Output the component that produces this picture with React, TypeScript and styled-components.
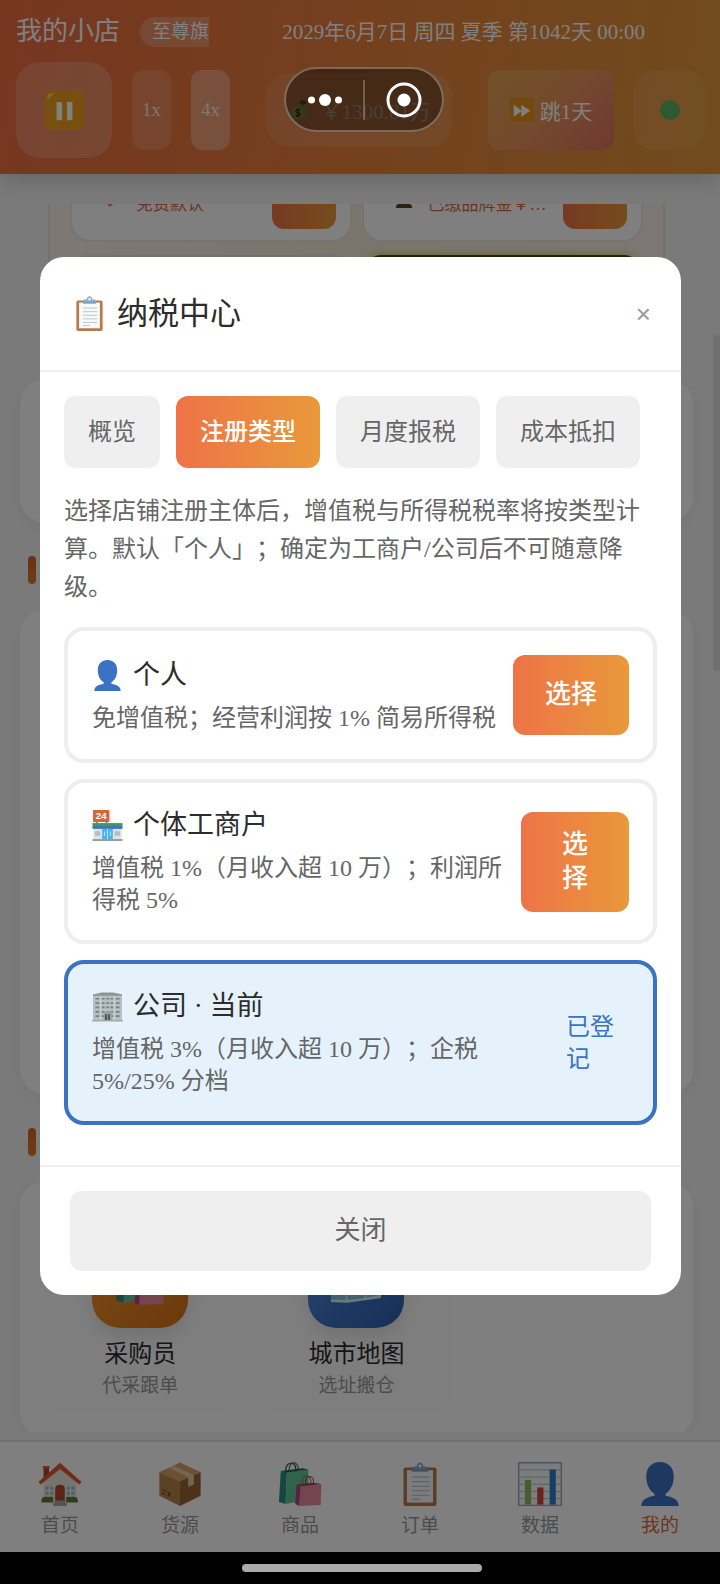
import React, { useState } from 'react'
import styled, { createGlobalStyle, css } from 'styled-components'

const colors = {
  text: '#2c2c2c',
  muted: '#666666',
  faint: '#999999',
  line: '#eeeeee',
  fill: '#efefef',
  page: '#f5f5f5',
  blue: '#3b72c4',
  blueSoft: '#e5f2fc',
}

const brand = 'linear-gradient(90deg, #ee7348 0%, #e9993a 100%)'

const GlobalStyle = createGlobalStyle`
  * {
    box-sizing: border-box;
  }
  body {
    margin: 0;
    font-family: 'Liberation Serif', 'Noto Sans CJK SC', sans-serif;
    font-weight: 400;
    text-spacing-trim: space-all;
    color: ${colors.text};
    background: #000;
  }
  button {
    margin: 0;
    padding: 0;
    border: 0;
    font: inherit;
    color: inherit;
    cursor: pointer;
  }
  h1, h2, h3, p {
    margin: 0;
    font-weight: inherit;
  }
`

/* ---------- icons ---------- */

const Svg = styled.svg<{ $size: number }>`
  display: block;
  flex: none;
  width: ${p => p.$size}px;
  height: ${p => p.$size}px;
`

interface IconProps {
  size: number
}

const ClipboardIcon = ({ size }: IconProps) => (
  <Svg $size={size} viewBox='0 0 32 32'>
    <rect x='4' y='4' width='24' height='28' rx='1.5' fill='#b9794a' />
    <path d='M6.500 6h19v23.500h-19z' fill='#f8f9fa' />
    <path d='M10 11h13M10 14.300h13M10 17.600h13M10 20.900h13M10 24.200h13M10 27h6' stroke='#b4c0ca' strokeWidth='.8' />
    <path d='M10 6.500V4.700c0-1 1-1.500 2.500-1.500h1C13.700 1.200 14.700.3 16 .3s2.300.9 2.500 2.900h1c1.500 0 2.500.5 2.500 1.500v1.800z' fill='#86acc8' />
    <circle cx='16' cy='2.9' r='1.1' fill='#fff' />
    <path d='M10 6.500h12' stroke='#5d87a6' strokeWidth='.8' />
  </Svg>
)

const PersonIcon = ({ size }: IconProps) => (
  <Svg $size={size} viewBox='0 0 32 32'>
    <path
      d='M16 0c-5.800 0-10 3.800-10 10.500 0 5 1.800 9.800 6 12.500v1.600C6.500 25.500 2.400 27.500 2.400 32h27.200c0-4.500-4.100-6.500-9.600-7.400V23c4.200-2.700 6-7.500 6-12.500C26 3.800 21.800 0 16 0z'
      fill={colors.blue}
    />
  </Svg>
)

const StoreIcon = ({ size }: IconProps) => (
  <Svg $size={size} viewBox='0 0 32 32'>
    <path d='M4 11h2v3H4zM14 11h2v3h-2z' fill='#888' />
    <rect x='1' width='17' height='12.5' rx='1' fill='#d9653b' />
    <text x='9.5' y='9.8' fontFamily='Liberation Sans' fontSize='10' fontWeight='700' textAnchor='middle' fill='#fff'>
      24
    </text>
    <rect x='1.5' y='18' width='29' height='12' fill='#dfe3e6' />
    <rect x='.5' y='13.5' width='31' height='3' fill='#3f9b57' />
    <rect x='.5' y='16.5' width='31' height='3' fill='#3f76b5' />
    <rect x='10.5' y='19.5' width='11' height='10.5' fill='#45b5ea' />
    <path d='M16 19.500V30M13 22v5M19 22v5' stroke='#d8f1fc' strokeWidth='.8' />
    <path d='M3 22h5.500v4.500H3zM23.500 22H29v4.500h-5.500z' fill='#b5bdc4' />
    <rect x='.5' y='30' width='31' height='2' fill='#9a9a9a' />
  </Svg>
)

const OfficeIcon = ({ size }: IconProps) => (
  <Svg $size={size} viewBox='0 0 32 32'>
    <path d='M1 3.500h30V31H1z' fill='#b9bec0' />
    <path d='M1 3.500L10 1.500h12l9 2V5H1z' fill='#8e9496' />
    {[8, 12.5, 17, 21.5, 26].map(y => (
      <path key={y} d={`M3.500 ${y}h4M10 ${y}h3M14.700 ${y}h3M19 ${y}h3M24.500 ${y}h4`} stroke='#66898d' strokeWidth='1.800' />
    ))}
    <path d='M9 5v25M23 5v25' stroke='#dadddd' strokeWidth='.8' />
    <path d='M12 21h8.500v9H12z' fill='#9ba0a2' />
    <path d='M13.500 24h2v6h-2zM16.500 24h2v6h-2z' fill='#4b5558' />
    <path d='M0 30h32v1.500H0z' fill='#a3a7a9' />
  </Svg>
)

const HouseIcon = ({ size }: IconProps) => (
  <Svg $size={size} viewBox='0 0 32 32'>
    <path d='M4 3h4v11H4z' fill='#a9492c' />
    <path d='M3.500 3h5v1.500h-5z' fill='#d7653e' />
    <path d='M4 14L16 3l12 11v15H4z' fill='#e9e6dd' />
    <path d='M16 .5L.3 14.500 2 16.300 16 5l14 11.300 1.700-1.800z' fill='#dc5b34' />
    <path d='M12.500 29V19.500q0-3 3.500-3t3.500 3V29z' fill='#b5492f' />
    <path d='M5.500 18H11v6H5.500zM21 18h5.500v6H21z' fill='#9dbfd2' />
    <path d='M8.200 18v6M5.500 21H11M23.700 18v6M21 21h5.500' stroke='#fff' strokeWidth='.8' />
    <path d='M2.500 29.500q-.5-4 2.500-4 1-1 2 0 3-.5 4 0v4zM20.500 29.500v-4q3-.5 4 0 1-1 2 0 3 0 2.500 4z' fill='#5e7d33' />
    <path d='M12 28h8v2h1v2H11v-2h1z' fill='#a8a8a8' />
  </Svg>
)

const BoxIcon = ({ size }: IconProps) => (
  <Svg $size={size} viewBox='0 0 32 32'>
    <path d='M1 7.500L16 .3l15 7.200L16 14z' fill='#d5a36a' />
    <path d='M1 7.500L16 14v18L1 24.500z' fill='#b9834b' />
    <path d='M31 7.500L16 14v18l15-7.500z' fill='#996535' />
    <path d='M8 4.200l3-1.500L26 9.300v7l-4 1.700v-7z' fill='#e8cba2' />
    <path d='M3 20l3 1.500M3 22.500l2 1M7 22l2 3M9 22l-2 3' stroke='#6d4523' strokeWidth='.8' fill='none' />
  </Svg>
)

const BagsIcon = ({ size }: IconProps) => (
  <Svg $size={size} viewBox='0 0 32 32'>
    <path d='M2 6.500l4.500.5-1 23.500L.7 29z' fill='#2f8d80' />
    <path d='M6.500 7L22 5.500v22L5.500 30.500z' fill='#5fc795' />
    <path d='M2 6.500L18 4.500l4 1L6.500 7.500z' fill='#1f5d52' />
    <path d='M5.500 8C5.500 2 7.500.7 10 1s3 2 3 6' fill='none' stroke='#3c5c57' />
    <path d='M8 5.500c.5-4 1.500-5 3.500-5S14.500 2 15 5.500' fill='none' stroke='#3c5c57' strokeWidth='.8' />
    <path d='M13.500 16.500l3 .5-1 15-3-1.500z' fill='#b54191' />
    <path d='M16.500 17L31.500 16 31 31.300 15.500 32z' fill='#e98a9b' />
    <path d='M13.500 16.500l12-1.500 6 1-15 1.500z' fill='#8d3652' />
    <path d='M17.500 17c0-5 1.500-7 3.500-7s3 2 3 6.500M20 16c0-4 1.500-5.500 3-5.500s3 1.500 3 5' fill='none' stroke='#a4606a' strokeWidth='.8' />
  </Svg>
)

const ChartIcon = ({ size }: IconProps) => (
  <Svg $size={size} viewBox='0 0 32 32'>
    <path d='M.5.500h31v31H.5z' fill='#f7f9fa' />
    <path d='M0 5.700h32M0 11h32M0 16.200h32M0 21.400h32M0 26.600h32' stroke='#b0bec5' strokeWidth='.7' />
    <path d='M.5.500h31v31H.5z' fill='none' stroke='#9aa7ae' />
    <path d='M5 13h4.500v18H5z' fill='#8fb858' />
    <path d='M14 18.500h4.500V31H14z' fill='#d04545' />
    <path d='M23 5.500h4.500V31H23z' fill='#2f7fc6' />
  </Svg>
)

const PauseIcon = ({ size }: IconProps) => (
  <Svg $size={size} viewBox='0 0 32 32'>
    <rect width='32' height='32' rx='2.5' fill='#ee9f1d' />
    <path d='M2 8V4q0-2 2-2h5Q4 3 2 8z' fill='#ffd36b' />
    <path d='M9.500 9H14v15H9.500zM18 9h4.500v15H18z' fill='#fff' />
  </Svg>
)

const ForwardIcon = ({ size }: IconProps) => (
  <Svg $size={size} viewBox='0 0 32 32'>
    <rect width='32' height='32' rx='2.5' fill='#e9921b' />
    <path d='M5 9l10 7.500V9l12 8-12 8v-7.500L5 25z' fill='#fff' />
  </Svg>
)

const MoneyIcon = ({ size }: IconProps) => (
  <Svg $size={size} viewBox='0 0 32 32'>
    <path d='M17 6l4-5 6 1.500 1 4-6 3z' fill='#67713a' />
    <path d='M18 8c-8 2-16 8-17 15-.5 5 5 8 14 8s16-2 16-9c0-6-5-11-9-14z' fill='#b0b26a' />
    <circle cx='16' cy='20' r='7.5' fill='#d5c34b' />
    <path d='M19 17q-1-2-3-2t-3 2 3 3 3 2.500-3 2.500-3-2M16 13.500v13' fill='none' stroke='#333' strokeWidth='1.600' />
  </Svg>
)

const MapIcon = ({ size }: IconProps) => (
  <Svg $size={size} viewBox='0 0 32 32'>
    <path d='M0 4l10 2 12-2 10 2v21l-10 1.500-12 1L0 30z' fill='#85c4df' />
    <path d='M10 6v24M22 4v24' stroke='#d9f0f8' />
    <path d='M3 9q6-2 9 2t-3 9q-5-1-6-11zM18 10q8-3 11 0t-5 9-6-9z' fill='#9fc977' />
    <path d='M0 28.500l10 .5 12-1.500L32 25.500v2L22 29l-12 1.500L0 30z' fill='#dff3f4' />
  </Svg>
)

/* ---------- shell ---------- */

const Phone = styled.div`
  display: flex;
  flex-direction: column;
  height: 100vh;
`

const Screen = styled.div`
  position: relative;
  display: flex;
  flex: 1;
  flex-direction: column;
  min-height: 0;
  background: ${colors.page};
`

const SystemBar = styled.div`
  display: flex;
  align-items: center;
  justify-content: center;
  height: 32px;
  padding-left: 4px;
  background: #000;
`

const HomeIndicator = styled.div`
  width: 240px;
  height: 8px;
  border-radius: 4px;
  background: #aaaaaa;
`

/* ---------- header ---------- */

const Header = styled.header`
  position: relative;
  z-index: 1;
  padding: 16px 15px 16px 16px;
  color: #fff;
  background: linear-gradient(100deg, #ee6c40 0%, #e2963a 100%);
  box-shadow: 0 4px 24px rgba(0, 0, 0, 0.2);
`

const TitleRow = styled.div`
  display: flex;
  align-items: center;
  height: 32px;
  margin-bottom: 14px;
`

const ShopTitle = styled.div`
  display: flex;
  flex: none;
  gap: 20px;
  align-items: center;
  width: 193px;
  overflow: hidden;
  white-space: nowrap;
`

const ShopName = styled.h1`
  font-size: 26px;
  line-height: 32px;
`

const Badge = styled.span`
  flex: none;
  padding: 0 0 0 12px;
  border-radius: 15px 0 0 15px;
  font-size: 19px;
  line-height: 30px;
  background: rgba(255, 255, 255, 0.22);
`

const DateText = styled.p`
  flex: 1;
  padding-right: 60px;
  font-size: 21px;
  line-height: 32px;
  text-align: right;
  white-space: nowrap;
`

const ControlRow = styled.div`
  display: flex;
  gap: 20px;
  align-items: center;
`

const headerButton = css`
  display: flex;
  flex: none;
  align-items: center;
  justify-content: center;
  height: 80px;
`

const PauseButton = styled.button`
  ${headerButton}
  width: 96px;
  height: 96px;
  border-radius: 24px;
  background: rgba(255, 255, 255, 0.2);
`

const SpeedButton = styled.button<{ $active?: boolean }>`
  ${headerButton}
  width: 39px;
  border-radius: 12px;
  font-size: 19px;
  color: rgba(255, 255, 255, 0.85);
  background: rgba(255, 255, 255, ${p => (p.$active ? 0.3 : 0.15)});
`

const Money = styled.div`
  display: flex;
  flex: 1;
  gap: 12px;
  align-items: center;
  justify-content: center;
  height: 74px;
  margin: 0 16px;
  border-radius: 24px;
  font-size: 21px;
  color: rgba(255, 255, 255, 0.6);
  background: rgba(255, 255, 255, 0.1);
`

const SkipButton = styled.button`
  ${headerButton}
  gap: 6px;
  width: 126px;
  border-radius: 12px;
  font-size: 21px;
  background: linear-gradient(135deg, #e3a552 0%, #e8935a 50%, #df7262 100%);
`

const StatusButton = styled.button`
  ${headerButton}
  width: 71px;
  border-radius: 20px;
  background: rgba(255, 255, 255, 0.08);
`

const StatusDot = styled.span`
  width: 20px;
  height: 20px;
  border-radius: 50%;
  background: #5cb564;
`

/* ---------- page behind the dialog ---------- */

const Content = styled.main`
  flex: 1;
  min-height: 0;
  margin: 30px 0 8px;
  padding: 0 27px 0 20px;
  overflow: hidden;
`

const Scrollbar = styled.div`
  position: absolute;
  top: 335px;
  right: 0;
  width: 7px;
  height: 336px;
  border-radius: 4px;
  background: #dedede;
`

const PlanPanel = styled.section`
  display: grid;
  grid-template-columns: 1fr 1fr;
  grid-template-rows: 38px auto;
  gap: 13px 10px;
  margin: 0 28px;
  height: 156px;
  padding: 0 20px;
  border: 2px solid #f4dfcb;
  border-top: 0;
  background: linear-gradient(90deg, #fcf1e8, #f5ead8 50%, #f9efe8);
`

const PlanCard = styled.article<{ $dark?: boolean }>`
  display: flex;
  gap: 12px;
  align-items: flex-end;
  min-width: 0;
  padding: 0 14px 0 32px;
  overflow: hidden;
  border: 2px solid #efe7df;
  border-top: 0;
  border-radius: 0 0 20px 20px;
  background: #fff;
`

const PlanCardNext = styled.article<{ $dark?: boolean }>`
  border: 2px solid #e8e0d8;
  border-radius: 20px;
  background: #fdfaf7;

  ${p =>
    p.$dark &&
    css`
      border-color: #4a4410;
      background: #17160c;
      box-shadow: 0 0 8px #d9c34a;
    `}
`

const PlanMark = styled.svg`
  flex: none;
  width: 16px;
  height: 10px;
  margin-bottom: 32px;
`

const PlanText = styled.p`
  flex: 1;
  min-width: 0;
  margin-bottom: 22px;
  padding-left: 4px;
  font-size: 17px;
  line-height: 26px;
  color: #d96b45;
  white-space: nowrap;
`

const PlanButton = styled.button`
  flex: none;
  width: 64px;
  height: 48px;
  margin-bottom: 11px;
  border-radius: 12px;
  background: ${brand};
`

const SectionCard = styled.section<{ $height?: number }>`
  min-height: ${p => p.$height ?? 0}px;
  padding: 24px;
  border-radius: 24px;
  background: #fff;
  box-shadow: 0 4px 16px rgba(0, 0, 0, 0.06);
`

const UpperCards = styled.div`
  margin-top: 20px;
`

const SectionHead = styled.div`
  padding: 34px 8px 26px;

  &::before {
    display: block;
    width: 8px;
    height: 28px;
    border-radius: 4px;
    background: linear-gradient(#d9622d, #d97f26);
    content: '';
  }
`

const EntryGrid = styled.div`
  display: grid;
  grid-template-columns: repeat(3, 1fr);
  gap: 24px;
`

const Entry = styled.a`
  display: flex;
  flex-direction: column;
  align-items: center;
  padding: 26px 0 13px;
  border-radius: 20px;
  color: inherit;
  text-decoration: none;
  background: #fcfcfc;
`

const EntryTile = styled.span<{ $background: string }>`
  display: grid;
  place-items: center;
  width: 96px;
  height: 96px;
  margin-bottom: 10px;
  border-radius: 28px;
  background: ${p => p.$background};
  box-shadow: 0 8px 16px rgba(0, 0, 0, 0.1);
`

const EntryName = styled.span`
  font-size: 24px;
  line-height: 32px;
`

const EntryNote = styled.span`
  margin-top: 2px;
  font-size: 19px;
  line-height: 28px;
  color: ${colors.faint};
`

const TabBar = styled.nav`
  display: grid;
  grid-template-columns: repeat(6, 1fr);
  height: 112px;
  border-top: 2px solid #e0e0e0;
  background: #fff;
`

const TabLink = styled.a<{ $active: boolean }>`
  display: flex;
  flex-direction: column;
  gap: 6px;
  align-items: center;
  padding-top: 20px;
  font-size: 19px;
  line-height: 28px;
  color: ${p => (p.$active ? '#e0683f' : colors.faint)};
  text-decoration: none;
`

/* ---------- dialog ---------- */

const Overlay = styled.div`
  position: absolute;
  inset: 0;
  z-index: 2;
  display: flex;
  align-items: center;
  padding: 0 39px 0 40px;
  background: rgba(0, 0, 0, 0.5);
`

const Dialog = styled.div`
  flex: 1;
  min-width: 0;
  border-radius: 24px;
  background: #fff;
`

const DialogHeader = styled.div`
  display: flex;
  align-items: center;
  justify-content: space-between;
  height: 115px;
  padding: 0 30px 0 32px;
  border-bottom: 2px solid ${colors.line};
`

const DialogTitle = styled.h2`
  display: flex;
  gap: 10px;
  align-items: center;
  font-size: 31px;
  line-height: 40px;
`

const DismissButton = styled.button`
  padding-left: 16px;
  font-family: 'Liberation Sans', sans-serif;
  font-size: 26px;
  line-height: 40px;
  color: ${colors.faint};
  background: none;
`

const DialogBody = styled.div`
  padding: 24px;
`

const Tabs = styled.div`
  display: flex;
  gap: 16px;
  margin-bottom: 24px;
`

const Tab = styled.button<{ $active: boolean }>`
  flex: none;
  padding: 0 24px;
  border-radius: 12px;
  font-size: 24px;
  font-weight: ${p => (p.$active ? 500 : 400)};
  line-height: 72px;
  color: ${p => (p.$active ? '#fff' : colors.muted)};
  background: ${p => (p.$active ? brand : colors.fill)};
`

const Intro = styled.p`
  margin-bottom: 21px;
  font-size: 24px;
  line-height: 38px;
  color: ${colors.muted};
`

const Option = styled.article<{ $current: boolean }>`
  display: flex;
  gap: 12px;
  align-items: center;
  justify-content: space-between;
  margin-bottom: 16px;
  padding: 24px;
  border: 4px solid ${p => (p.$current ? colors.blue : colors.line)};
  border-radius: 20px;
  background: ${p => (p.$current ? colors.blueSoft : '#fff')};
`

const OptionInfo = styled.div`
  flex: 1;
  min-width: 0;
`

const OptionName = styled.h3`
  display: flex;
  gap: 10px;
  align-items: center;
  margin-bottom: 8px;
  font-size: 27px;
  line-height: 37px;
`

const OptionText = styled.p`
  font-size: 24px;
  line-height: 32px;
  color: ${colors.muted};
`

const ChooseButton = styled.button<{ $stacked: boolean }>`
  flex: none;
  width: ${p => (p.$stacked ? 108 : 116)}px;
  padding: ${p => (p.$stacked ? '16px 40px' : '23px 32px')};
  border-radius: 12px;
  font-size: 26px;
  font-weight: 500;
  line-height: 34px;
  color: #fff;
  background: ${brand};
`

const Registered = styled.span`
  flex: none;
  width: 63px;
  font-size: 24px;
  line-height: 32px;
  color: ${colors.blue};
`

const DialogFooter = styled.div`
  padding: 24px 30px;
  border-top: 2px solid ${colors.line};
`

const CloseButton = styled.button`
  width: 100%;
  border-radius: 12px;
  font-size: 26px;
  line-height: 80px;
  color: ${colors.muted};
  background: ${colors.fill};
`

/* ---------- mini program capsule ---------- */

const Capsule = styled.div`
  position: absolute;
  top: 67px;
  left: 284px;
  z-index: 3;
  display: flex;
  align-items: center;
  width: 160px;
  height: 65px;
  border: 2px solid rgba(255, 255, 255, 0.3);
  border-radius: 33px;
  background: rgba(0, 0, 0, 0.4);
`

const CapsuleButton = styled.button`
  display: grid;
  flex: 1;
  place-items: center;
  height: 40px;
  background: none;

  & + & {
    border-left: 2px solid rgba(255, 255, 255, 0.25);
  }
`

const tabs = ['概览', '注册类型', '月度报税', '成本抵扣']

const options = [
  { icon: PersonIcon, name: '个人', text: '免增值税；经营利润按 1% 简易所得税', stacked: false },
  { icon: StoreIcon, name: '个体工商户', text: '增值税 1%（月收入超 10 万）；利润所得税 5%', stacked: true },
  { icon: OfficeIcon, name: '公司', text: '增值税 3%（月收入超 10 万）；企税 5%/25% 分档', current: true },
]

const entries = [
  { icon: BagsIcon, name: '采购员', note: '代采跟单', background: 'linear-gradient(135deg, #f59a2e, #d97016)' },
  { icon: MapIcon, name: '城市地图', note: '选址搬仓', background: 'linear-gradient(135deg, #4a90e2, #2f5dab)' },
]

const navItems = [
  { icon: HouseIcon, name: '首页' },
  { icon: BoxIcon, name: '货源' },
  { icon: BagsIcon, name: '商品' },
  { icon: ClipboardIcon, name: '订单' },
  { icon: ChartIcon, name: '数据' },
  { icon: PersonIcon, name: '我的' },
]

const ShopHeader: React.FC = () => (
  <Header>
    <TitleRow>
      <ShopTitle>
        <ShopName>我的小店</ShopName>
        <Badge>至尊旗</Badge>
      </ShopTitle>
      <DateText>2029年6月7日 周四 夏季 第1042天 00:00</DateText>
    </TitleRow>
    <ControlRow>
      <PauseButton aria-label='暂停'>
        <PauseIcon size={39} />
      </PauseButton>
      <SpeedButton>1x</SpeedButton>
      <SpeedButton $active>4x</SpeedButton>
      <Money>
        <MoneyIcon size={22} />
        <span>￥1300.81万</span>
      </Money>
      <SkipButton>
        <ForwardIcon size={24} />
        跳1天
      </SkipButton>
      <StatusButton aria-label='状态'>
        <StatusDot />
      </StatusButton>
    </ControlRow>
  </Header>
)

const TaxDialog: React.FC = () => {
  const [activeTab, setActiveTab] = useState('注册类型')

  return (
    <Dialog role='dialog' aria-labelledby='tax-title'>
      <DialogHeader>
        <DialogTitle id='tax-title'>
          <ClipboardIcon size={35} />
          纳税中心
        </DialogTitle>
        <DismissButton aria-label='关闭'>×</DismissButton>
      </DialogHeader>
      <DialogBody>
        <Tabs>
          {tabs.map(tab => (
            <Tab key={tab} $active={tab === activeTab} onClick={() => setActiveTab(tab)}>
              {tab}
            </Tab>
          ))}
        </Tabs>
        <Intro>选择店铺注册主体后，增值税与所得税税率将按类型计算。默认「个人」；确定为工商户/公司后不可随意降级。</Intro>
        {options.map(({ icon: Icon, name, text, stacked, current }) => (
          <Option key={name} $current={!!current}>
            <OptionInfo>
              <OptionName>
                <Icon size={31} />
                {current ? `${name} · 当前` : name}
              </OptionName>
              <OptionText>{text}</OptionText>
            </OptionInfo>
            {current ? <Registered>已登记</Registered> : <ChooseButton $stacked={!!stacked}>选择</ChooseButton>}
          </Option>
        ))}
      </DialogBody>
      <DialogFooter>
        <CloseButton>关闭</CloseButton>
      </DialogFooter>
    </Dialog>
  )
}

const App: React.FC = () => (
  <Phone>
    <GlobalStyle />
    <Screen>
      <ShopHeader />
      <Content>
        <PlanPanel>
          <PlanCard>
            <PlanMark viewBox='0 0 16 10'>
              <path d='M1 4l5 5 5-5z' fill='#e08a55' />
            </PlanMark>
            <PlanText>免费默认</PlanText>
            <PlanButton aria-label='免费默认' />
          </PlanCard>
          <PlanCard>
            <PlanMark viewBox='0 0 16 10'>
              <path d='M0 10V8q2-3 8-3t8 3v2z' fill='#5d3f26' />
            </PlanMark>
            <PlanText>已缴品牌金￥…</PlanText>
            <PlanButton aria-label='已缴品牌金' />
          </PlanCard>
          <PlanCardNext />
          <PlanCardNext $dark />
        </PlanPanel>
        <UpperCards>
          <SectionCard $height={142} />
        </UpperCards>
        <SectionHead />
        <SectionCard $height={484} />
        <SectionHead />
        <SectionCard>
          <EntryGrid>
            {entries.map(({ icon: Icon, name, note, background }) => (
              <Entry key={name} href='#'>
                <EntryTile $background={background}>
                  <Icon size={50} />
                </EntryTile>
                <EntryName>{name}</EntryName>
                <EntryNote>{note}</EntryNote>
              </Entry>
            ))}
          </EntryGrid>
        </SectionCard>
      </Content>
      <Scrollbar />
      <TabBar>
        {navItems.map(({ icon: Icon, name }) => (
          <TabLink key={name} href='#' $active={name === '我的'}>
            <Icon size={44} />
            {name}
          </TabLink>
        ))}
      </TabBar>
      <Overlay>
        <TaxDialog />
      </Overlay>
      <Capsule>
        <CapsuleButton aria-label='更多'>
          <svg width='34' height='12' viewBox='0 0 34 12' fill='#fff'>
            <circle cx='3.5' cy='6' r='3.5' />
            <circle cx='17' cy='6' r='6' />
            <circle cx='30.5' cy='6' r='3.5' />
          </svg>
        </CapsuleButton>
        <CapsuleButton aria-label='退出'>
          <svg width='36' height='36' viewBox='0 0 36 36'>
            <circle cx='18' cy='18' r='16' fill='none' stroke='#fff' strokeWidth='3' />
            <circle cx='18' cy='18' r='6.5' fill='#fff' />
          </svg>
        </CapsuleButton>
      </Capsule>
    </Screen>
    <SystemBar>
      <HomeIndicator />
    </SystemBar>
  </Phone>
)

export default App
